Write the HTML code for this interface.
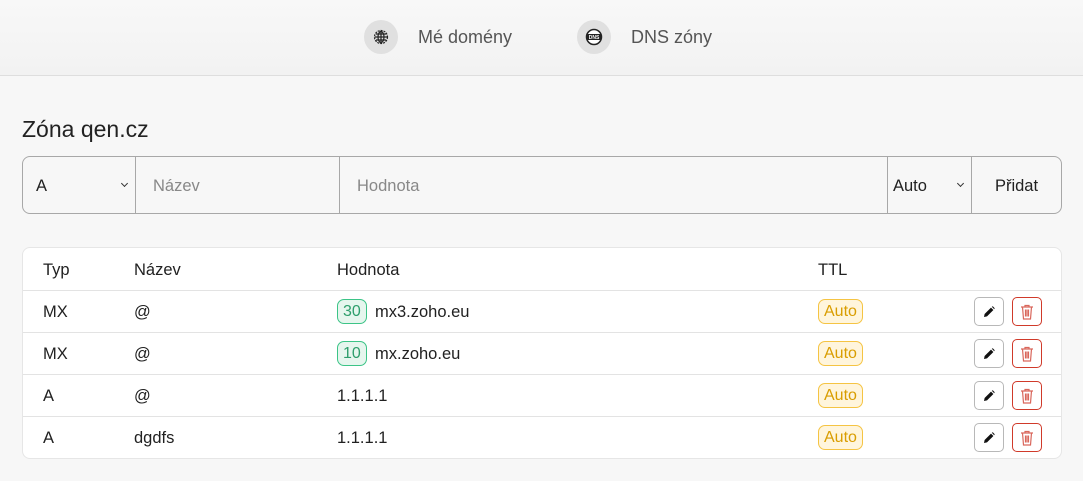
<!DOCTYPE html>
<html><head><meta charset="utf-8"><style>
*{box-sizing:border-box;margin:0;padding:0}
body{width:1083px;height:481px;background:#f7f7f7;font-family:"Liberation Sans",sans-serif;color:#212121;position:relative;overflow:hidden}
.hdr{position:absolute;left:0;top:0;width:1083px;height:76px;background:linear-gradient(#f8f8f8,#f2f2f2);border-bottom:1px solid #dedede}
.nav{position:absolute;top:20px;display:flex;align-items:center;font-size:18px;color:#555}
.ic{width:34px;height:34px;border-radius:50%;background:#e0e0e0;display:flex;align-items:center;justify-content:center;margin-right:20px}
h1{position:absolute;left:22px;top:116px;font-size:23px;font-weight:normal;color:#222}
.form{position:absolute;left:22px;top:156px;width:1040px;height:58px;border:1px solid #a8a8a8;border-radius:8px;display:flex;font-size:16.5px}
.form div{height:100%;display:flex;align-items:center;border-right:1px solid #a8a8a8;position:relative}
.form div span{position:relative;top:1px}
.form div:last-child{border-right:none}
.ph{color:#888}
.chev{position:absolute;right:8px;top:24px;width:5px;height:5px;border-right:1.5px solid #333;border-bottom:1.5px solid #333;transform:rotate(45deg)}
.tbl{position:absolute;left:22px;top:247px;width:1040px;height:212px;background:#fff;border:1px solid #e6e6e6;border-radius:8px;font-size:16.5px}
.row{position:absolute;left:0;width:1038px;height:42px;border-top:1px solid #e3e3e3}
.row span{position:absolute;top:12px}
.row .b{position:absolute;top:8px;height:25px;border-radius:7px;font-size:16px;line-height:24px;padding:0 5px;font-weight:normal}
.g{background:#e6f6ee;border:1px solid #3cc487;color:#2e9e6c}
.y{background:#fff5dc;border:1px solid #f5c443;color:#d99d00}
.btn{position:absolute;top:6px;width:30px;height:29px;border-radius:5px;display:flex;align-items:center;justify-content:center}
.e{left:951px;border:1px solid #b8b8b8}
.d{left:989px;border:1px solid #d03a2a}
</style></head><body>
<div class="hdr">
 <div class="nav" style="left:364px"><div class="ic"><svg width="16" height="16" viewBox="0 0 16 16" fill="none" stroke="#222" stroke-width="1.2"><circle cx="8" cy="8" r="6.5" stroke-dasharray="2 1"/><ellipse cx="8" cy="8" rx="3" ry="5.5"/><path d="M2 8h12M3 5h10M3 11h10M8 2v12"/></svg></div>Mé domény</div>
 <div class="nav" style="left:577px"><div class="ic"><svg width="18" height="18" viewBox="0 0 18 18"><circle cx="9" cy="9" r="7.5" fill="#fff" stroke="#222" stroke-width="1.5"/><rect x="1.5" y="6" width="15" height="6" fill="#222"/><text x="9" y="11" font-size="5" font-weight="bold" fill="#fff" text-anchor="middle" font-family="Liberation Sans">DNS</text></svg></div>DNS zóny</div>
</div>
<h1>Zóna qen.cz</h1>
<div class="form">
 <div style="width:113px;padding-left:13px"><span>A</span><i class="chev"></i></div>
 <div style="width:204px;padding-left:17px" class="ph"><span>Název</span></div>
 <div style="width:548px;padding-left:17px" class="ph"><span>Hodnota</span></div>
 <div style="width:84px;padding-left:5px"><span>Auto</span><i class="chev"></i></div>
 <div style="flex:1;justify-content:center"><span>Přidat</span></div>
</div>
<div class="tbl">
 <div class="row" style="top:0;border-top:none"><span style="left:20px;top:13px">Typ</span><span style="left:111px;top:13px">Název</span><span style="left:314px;top:13px">Hodnota</span><span style="left:795px;top:13px">TTL</span></div>
 <div class="row" style="top:42px"><span style="left:20px">MX</span><span style="left:111px">@</span><b class="b g" style="left:314px">30</b><span style="left:352px">mx3.zoho.eu</span><b class="b y" style="left:795px">Auto</b><div class="btn e"></div><div class="btn d"></div></div>
 <div class="row" style="top:84px"><span style="left:20px">MX</span><span style="left:111px">@</span><b class="b g" style="left:314px">10</b><span style="left:352px">mx.zoho.eu</span><b class="b y" style="left:795px">Auto</b><div class="btn e"></div><div class="btn d"></div></div>
 <div class="row" style="top:126px"><span style="left:20px">A</span><span style="left:111px">@</span><span style="left:314px">1.1.1.1</span><b class="b y" style="left:795px">Auto</b><div class="btn e"></div><div class="btn d"></div></div>
 <div class="row" style="top:168px"><span style="left:20px">A</span><span style="left:111px">dgdfs</span><span style="left:314px">1.1.1.1</span><b class="b y" style="left:795px">Auto</b><div class="btn e"></div><div class="btn d"></div></div>
</div>
<script>
document.querySelectorAll('.e').forEach(function(d){d.innerHTML='<svg width="12" height="12" viewBox="0 0 12 12"><path d="M1 11l0.6-3L8 1.6l2.4 2.4L4 10.4z" fill="#111"/><path d="M8.8 0.8l1-0.5 1.9 1.9-0.5 1z" fill="#111"/></svg>'});
document.querySelectorAll('.d').forEach(function(d){d.innerHTML='<svg width="14" height="16" viewBox="0 0 14 16" fill="none" stroke="#d9675c" stroke-width="1.2"><path d="M1 3h12M5 3V1.5h4V3M2.5 3l1 12h7l1-12M5.5 5.5v7M7 5.5v7M8.5 5.5v7"/></svg>'});
</script>
</body></html>
